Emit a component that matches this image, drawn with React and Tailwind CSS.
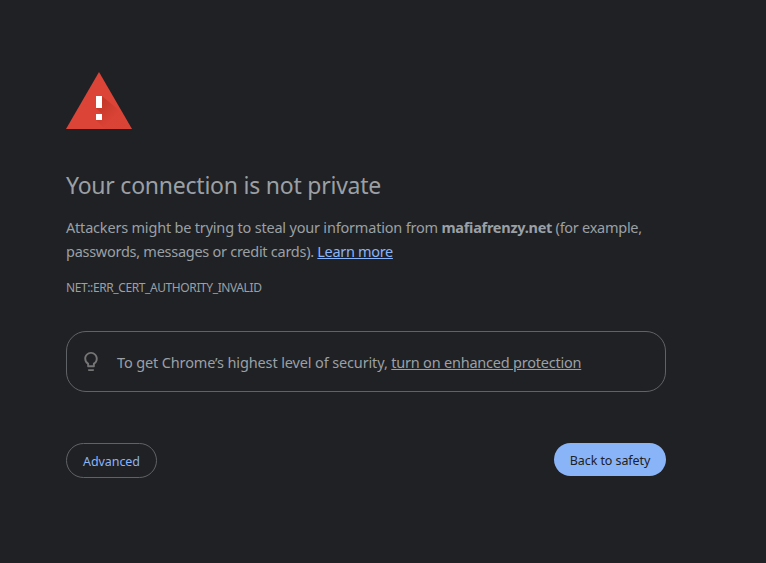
import React from "react";

const WarningIcon = () => (
  <svg className="block h-[57px] w-[66px]" viewBox="0 0 66 57">
    <defs>
      <linearGradient id="shade" gradientUnits="userSpaceOnUse" x1="33" y1="34" x2="46" y2="47">
        <stop offset="0" stopColor="#a52714" stopOpacity="0.4" />
        <stop offset="1" stopColor="#a52714" stopOpacity="0.03" />
      </linearGradient>
    </defs>
    <path d="M33 0L66 57H0z" fill="#db4437" />
    <path d="M36 24l21.3 18L66 57H39l-9-9 6-6-6-6z" fill="url(#shade)" />
    <path d="M30 24h6v12h-6zM30 42h6v6h-6z" fill="#fff" />
  </svg>
);

const BulbIcon = () => (
  <svg className="-mt-px block h-[23px] w-6" viewBox="0 0 24 24" fill="#757575">
    <path d="M9 21c0 .55.45 1 1 1h4c.55 0 1-.45 1-1v-1H9v1zm3-19C8.14 2 5 5.14 5 9c0 2.38 1.19 4.47 3 5.74V17c0 .55.45 1 1 1h6c.55 0 1-.45 1-1v-2.26c1.81-1.27 3-3.36 3-5.74 0-3.86-3.14-7-7-7zm2.85 11.1l-.85.6V16h-4v-2.3l-.85-.6A4.997 4.997 0 017 9c0-2.76 2.24-5 5-5s5 2.24 5 5c0 1.63-.8 3.16-2.15 4.1z" />
  </svg>
);

const App = () => {
  return (
    <div className="h-screen overflow-hidden bg-[#202124] pt-[72px] pl-[66px] font-['Noto_Sans',sans-serif] text-[#9aa0a6]">
      <main className="w-[600px]">
        <WarningIcon />
        <h1 className="mt-[42px] text-[23px] leading-[29px] tracking-[-0.23px] whitespace-nowrap">
          <span>Your connection is not private</span>
        </h1>
        <div className="mt-[15px] text-[14.5px] leading-6 whitespace-nowrap">
          <p>
            <span className="tracking-[-0.195px]">Attackers might be trying to steal your information from </span>
            <strong className="font-bold tracking-[-0.27px]">mafiafrenzy.net</strong>
            <span className="tracking-[-0.27px]"> (for example,</span>
          </p>
          <p>
            <span className="tracking-[-0.27px]">passwords, messages or credit cards). </span>
            <a href="#" className="tracking-[-0.33px] text-[#8ab4f8] underline">Learn more</a>
          </p>
        </div>
        <div className="mt-4 text-[12px] leading-[18px] tracking-[-0.4px]">NET::ERR_CERT_AUTHORITY_INVALID</div>
        <div className="mt-[34px] flex h-[61px] items-center rounded-[20px] border border-[#5f6368] pl-3">
          <BulbIcon />
          <p className="ml-[14px] text-[14.5px] leading-6 whitespace-nowrap">
            <span className="tracking-[-0.135px]">To get Chrome’s highest level of security, </span>
            <a href="#" className="tracking-[-0.22px] underline">turn on enhanced protection</a>
          </p>
        </div>
        <div className="mt-[51px] flex items-start justify-between text-[12.5px] tracking-[-0.09px]">
          <button className="h-[35px] w-[91px] rounded-full border border-[#5f6368] pt-[3px] text-[#8ab4f8]">Advanced</button>
          <button className="h-[33px] w-[112px] rounded-full bg-[#8ab4f8] pt-[3px] text-[#202124]">Back to safety</button>
        </div>
      </main>
    </div>
  );
};

export default App;
